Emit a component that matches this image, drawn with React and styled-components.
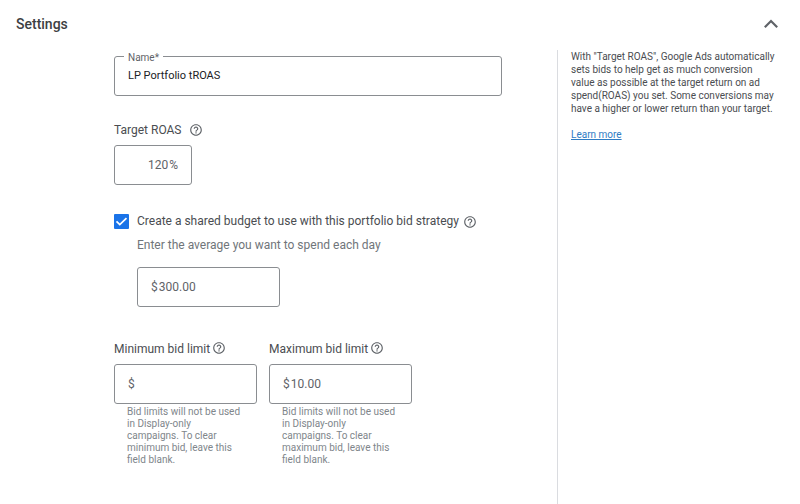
import React, { useState } from 'react';
import styled, { createGlobalStyle } from 'styled-components';
import { MdHelpOutline } from 'react-icons/md';

const GlobalStyle = createGlobalStyle`
  * {
    box-sizing: border-box;
  }

  body {
    margin: 0;
    background: #fff;
    color: #4a4d51;
    font-family: Roboto, "Liberation Sans", sans-serif;
    font-size: 12px;
    line-height: 16px;
  }
`;

const Panel = styled.section`
  display: flex;
  flex-direction: column;
  min-height: 100vh;
`;

const Header = styled.header`
  display: flex;
  align-items: center;
  justify-content: space-between;
  height: 48px;
  padding: 0 17px 0 16px;
`;

const Title = styled.h1`
  margin: 0;
  color: #3c4043;
  font-size: 14px;
  font-weight: 500;
  line-height: 16px;
`;

const IconButton = styled.button`
  display: flex;
  padding: 0;
  border: 0;
  background: none;
  color: #5f6368;
  cursor: pointer;
`;

const Chevron = styled.svg`
  width: 24px;
  height: 24px;
  fill: none;
  stroke: currentColor;
  stroke-width: 2.2;
  transform: ${props => (props.$open ? 'none' : 'rotate(180deg)')};
`;

const Content = styled.div`
  display: grid;
  grid-template-columns: minmax(0, 1fr) 243px;
  flex: 1;
  padding-top: 2px;
`;

const Form = styled.form`
  display: flex;
  flex-direction: column;
  padding: 6px 55px 40px 114px;
`;

const Outline = styled.div`
  position: relative;
  display: flex;
  align-items: center;
  gap: 1px;
  width: ${props => props.width || '100%'};
  height: 40px;
  padding: 0 13px;
  border: 1px solid #8a8d91;
  border-radius: 3px;
  color: #5f6368;
`;

const FloatingLabel = styled.label`
  position: absolute;
  top: -6px;
  left: 9px;
  padding: 0 4px;
  background: #fff;
  color: #5f6368;
  font-size: 10px;
  line-height: 14px;
`;

const Input = styled.input`
  flex: 1;
  min-width: 0;
  padding: 0;
  border: 0;
  outline: 0;
  background: none;
  color: inherit;
  font: inherit;
  text-align: ${props => props.$align || 'left'};
`;

const NameInput = styled(Input)`
  color: #202124;
  font-size: 11px;
`;

const Group = styled.div`
  display: flex;
  flex-direction: column;
  gap: 7px;
  margin-top: 26px;
`;

const LabelRow = styled.div`
  display: flex;
  align-items: ${props => props.$align || 'center'};
  gap: ${props => props.$gap || '8px'};
  height: 16px;
`;

const SharedBudget = styled.div`
  display: grid;
  grid-template-columns: 15px minmax(0, 1fr);
  column-gap: 8px;
  row-gap: 8px;
  align-items: center;
  margin-top: 28px;
`;

const Checkbox = styled.input`
  appearance: none;
  width: 15px;
  height: 15px;
  margin: 0;
  border: 2px solid #5f6368;
  border-radius: 1px;

  &:checked {
    border: 0;
    background: #1a73e8 url("data:image/svg+xml,%3Csvg xmlns='http://www.w3.org/2000/svg' viewBox='0 0 15 15'%3E%3Cpath d='M2.5 7.3l3.3 3.3 6.7-6.5' fill='none' stroke='white' stroke-width='1.7'/%3E%3C/svg%3E");
  }
`;

const BudgetDetails = styled.div`
  display: flex;
  flex-direction: column;
  grid-column: 2;
  gap: 14px;
  color: #70757a;
`;

const Limits = styled.div`
  display: flex;
  gap: 12px;
  margin-top: 34px;
`;

const Limit = styled.div`
  display: flex;
  flex-direction: column;
  gap: 7px;
  width: 143px;
`;

const Hint = styled.p`
  margin: -5px 0 0;
  padding: 0 12px 0 13px;
  color: #80868b;
  font-size: 10px;
  line-height: 12px;
`;

const Aside = styled.aside`
  padding: 0 22px 0 13px;
  border-left: 1px solid #dadce0;
  font-size: 10px;
  line-height: 13px;
`;

const Description = styled.p`
  margin: 0 0 13px;
`;

const Link = styled.a`
  color: #2f7cc4;
  text-decoration: underline;
`;

function Help({ about }) {
  return (
    <IconButton type="button" aria-label={`Help for ${about}`}>
      <MdHelpOutline size={14} />
    </IconButton>
  );
}

function BidLimit({ id, label, hint, value, onChange }) {
  return (
    <Limit>
      <LabelRow $gap="2px" $align="flex-start">
        <label htmlFor={id}>{label}</label>
        <Help about={label} />
      </LabelRow>
      <Outline>
        <span>$</span>
        <Input id={id} name={id} value={value} onChange={onChange} />
      </Outline>
      <Hint>{hint}</Hint>
    </Limit>
  );
}

function App() {
  const [open, setOpen] = useState(true);
  const [values, setValues] = useState({
    name: 'LP Portfolio tROAS',
    roas: '120',
    shared: true,
    budget: '300.00',
    minimum: '',
    maximum: '10.00',
  });

  const onChange = event => {
    const { name, type, checked, value } = event.target;
    setValues({ ...values, [name]: type === 'checkbox' ? checked : value });
  };

  return (
    <Panel>
      <GlobalStyle />
      <Header>
        <Title>Settings</Title>
        <IconButton
          type="button"
          aria-label="Toggle settings"
          aria-expanded={open}
          onClick={() => setOpen(!open)}
        >
          <Chevron viewBox="0 0 24 24" $open={open}>
            <path d="M5.8 15.2L12 9l6.2 6.2" />
          </Chevron>
        </IconButton>
      </Header>

      {open && (
        <Content>
          <Form onSubmit={event => event.preventDefault()}>
            <Outline>
              <FloatingLabel htmlFor="name">Name*</FloatingLabel>
              <NameInput id="name" name="name" value={values.name} onChange={onChange} />
            </Outline>

            <Group>
              <LabelRow>
                <label htmlFor="roas">Target ROAS</label>
                <Help about="Target ROAS" />
              </LabelRow>
              <Outline width="78px">
                <Input id="roas" name="roas" $align="right" value={values.roas} onChange={onChange} />
                <span>%</span>
              </Outline>
            </Group>

            <SharedBudget>
              <Checkbox
                type="checkbox"
                id="shared"
                name="shared"
                checked={values.shared}
                onChange={onChange}
              />
              <LabelRow $gap="4px" $align="flex-end">
                <label htmlFor="shared">
                  Create a shared budget to use with this portfolio bid strategy
                </label>
                <Help about="shared budget" />
              </LabelRow>
              <BudgetDetails>
                <label htmlFor="budget">Enter the average you want to spend each day</label>
                <Outline width="143px">
                  <span>$</span>
                  <Input id="budget" name="budget" value={values.budget} onChange={onChange} />
                </Outline>
              </BudgetDetails>
            </SharedBudget>

            <Limits>
              <BidLimit
                id="minimum"
                label="Minimum bid limit"
                hint="Bid limits will not be used in Display-only campaigns. To clear minimum bid, leave this field blank."
                value={values.minimum}
                onChange={onChange}
              />
              <BidLimit
                id="maximum"
                label="Maximum bid limit"
                hint="Bid limits will not be used in Display-only campaigns. To clear maximum bid, leave this field blank."
                value={values.maximum}
                onChange={onChange}
              />
            </Limits>
          </Form>

          <Aside>
            <Description>
              With "Target ROAS", Google Ads automatically sets bids to help get as much conversion
              value as possible at the target return on ad spend(ROAS) you set. Some conversions may
              have a higher or lower return than your target.
            </Description>
            <Link href="#learn-more">Learn more</Link>
          </Aside>
        </Content>
      )}
    </Panel>
  );
}

export default App;
